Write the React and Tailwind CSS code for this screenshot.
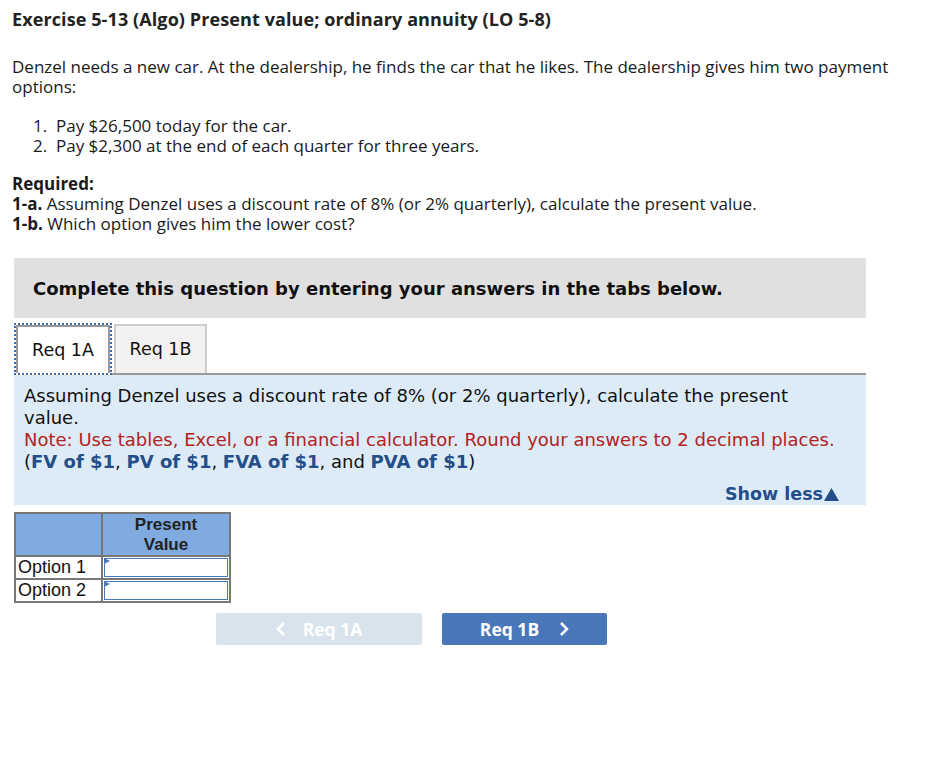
export default function App() {
  return (
    <div className="w-[940px] h-[758px] bg-white text-[#1a1a1a]">
      {/* Intro */}
      <div className="font-['Open_Sans','Liberation_Sans',sans-serif] pl-3 pr-[20px]">
        <h1 className="pt-[7px] text-[18px] font-bold leading-[24px] text-[#222] tracking-[0.1px]">
          Exercise 5-13 (Algo) Present value; ordinary annuity (LO 5-8)
        </h1>
        <p className="mt-[26px] text-[17px] leading-[20px]">
          Denzel needs a new car. At the dealership, he finds the car that he likes. The dealership gives him two payment options:
        </p>
        <ol className="mt-[19px] pl-[21px] text-[17px] leading-[20px]">
          <li>1.&nbsp; Pay $26,500 today for the car.</li>
          <li>2.&nbsp; Pay $2,300 at the end of each quarter for three years.</li>
        </ol>
        <div className="mt-[18px] text-[17px] leading-[20px]">
          <p className="font-bold">Required:</p>
          <p><span className="font-bold">1-a.</span> Assuming Denzel uses a discount rate of 8% (or 2% quarterly), calculate the present value.</p>
          <p><span className="font-bold">1-b.</span> Which option gives him the lower cost?</p>
        </div>
      </div>

      {/* Question area */}
      <div className="ml-[14px] w-[852px] mt-[24px] font-['DejaVu_Sans','Verdana',sans-serif]">
        <div className="h-[60px] bg-[#e0e0e0] flex items-center pl-[19px] text-[18px] font-bold text-[#111]">
          Complete this question by entering your answers in the tabs below.
        </div>

        {/* Tabs */}
        <div className="mt-[5px] flex items-end border-b-2 border-[#9a9a9a] h-[52px]">
          <div className="h-[52px] w-[98px] border-2 border-dotted border-[#3c6bb5] -mb-[2px] bg-white">
            <div className="h-full border-x-2 border-t-2 border-[#9a9a9a] border-b-0 flex items-center justify-center text-[17.5px] text-[#111]">
              Req 1A
            </div>
          </div>
          <div className="ml-[2px] h-[49px] w-[93px] bg-[#f2f2f2] border-x-2 border-t-2 border-[#cdcdcd] flex items-center justify-center text-[17.5px] text-[#111]">
            Req 1B
          </div>
        </div>

        {/* Panel */}
        <div className="h-[130px] bg-[#ddebf7] pl-[10px] pr-[24px] pt-[10px] text-[18px] leading-[22px] text-[#111]">
          <p>Assuming Denzel uses a discount rate of 8% (or 2% quarterly), calculate the present value.</p>
          <p className="text-[#b22222]">Note: Use tables, Excel, or a financial calculator. Round your answers to 2 decimal places.</p>
          <p>
            (<span className="font-bold text-[#244e88]">FV of $1</span>, <span className="font-bold text-[#244e88]">PV of $1</span>, <span className="font-bold text-[#244e88]">FVA of $1</span>, and <span className="font-bold text-[#244e88]">PVA of $1</span>)
          </p>
          <div className="flex justify-end mt-[10px] pr-[3px]">
            <span className="font-bold text-[#244e88] flex items-center text-[17.5px]">
              Show less
              <svg width="15" height="13" viewBox="0 0 14 12" className="ml-[1px]">
                <path d="M7 0 L14 12 L0 12 Z" fill="#244e88" />
              </svg>
            </span>
          </div>
        </div>

        {/* Table */}
        <table className="mt-[7px] border-collapse font-['Liberation_Sans',Arial,sans-serif] text-[18px] text-[#111]">
          <tbody>
            <tr className="bg-[#7fabe0] h-[43px]">
              <td className="w-[87px] border-2 border-[#777]"></td>
              <td className="w-[128px] border-2 border-[#777] text-center font-bold text-[17px] leading-[20px] text-[#222]">Present<br />Value</td>
            </tr>
            {["Option 1", "Option 2"].map((o) => (
              <tr key={o} className="h-[23px] bg-white">
                <td className="border-2 border-[#777] pl-[2px] leading-[19px]">{o}</td>
                <td className="border-2 border-[#777] p-0 relative">
                  <div className="h-[19px] mx-[1px] border border-[#4a77b9] bg-white"></div>
                  <svg width="6" height="6" viewBox="0 0 6 6" className="absolute left-[1px] top-[1px]">
                    <path d="M0 0 L6 3 L0 6 Z" fill="#4a77b9" />
                  </svg>
                </td>
              </tr>
            ))}
          </tbody>
        </table>
      </div>

      {/* Nav buttons */}
      <div className="mt-[10px] ml-[216px] flex gap-[20px] font-['Open_Sans','Liberation_Sans',sans-serif]">
        <div className="w-[206px] h-[32px] rounded-[2px] bg-[#d9e3ee] flex items-center justify-center text-white font-bold text-[17.5px]">
          <svg width="10" height="16" viewBox="0 0 10 16" className="mr-[17px]">
            <path d="M8 2 L2 8 L8 14" fill="none" stroke="#fff" strokeWidth="2.5" />
          </svg>
          Req 1A
        </div>
        <div className="w-[165px] h-[32px] rounded-[2px] bg-[#4a77b9] flex items-center justify-center text-white font-bold text-[17.5px]">
          Req 1B
          <svg width="10" height="16" viewBox="0 0 10 16" className="ml-[20px]">
            <path d="M2 2 L8 8 L2 14" fill="none" stroke="#fff" strokeWidth="2.5" />
          </svg>
        </div>
      </div>
    </div>
  );
}
